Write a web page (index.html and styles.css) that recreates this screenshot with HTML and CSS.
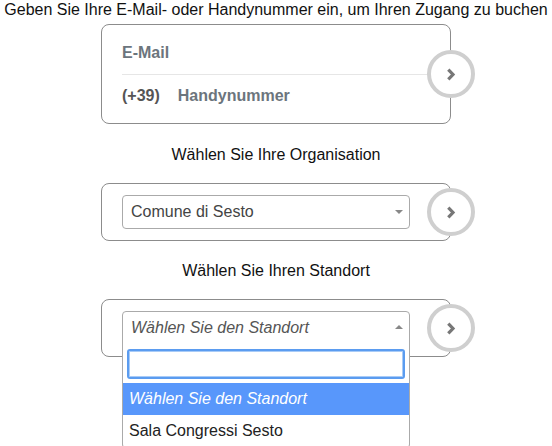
FILE: index.html
```html
<!DOCTYPE html>
<html lang="de">
<head>
    <meta charset="UTF-8">
    <meta name="viewport" content="width=device-width, initial-scale=1.0">
    <title>Zugang buchen</title>
    <link rel="stylesheet" href="styles.css">
</head>
<body>

    <p class="intro">Geben Sie Ihre E-Mail- oder Handynummer ein, um Ihren Zugang zu buchen</p>

    <div class="step">
        <div class="card card-login">
            <div class="field">E-Mail</div>
            <div class="field"><span class="prefix">(+39)</span>Handynummer</div>
        </div>
        <button class="next" type="button">
            <svg width="10" height="13" viewBox="0 0 10 13"><path d="M2.3 1.6 L7 6.5 L2.3 11.4" fill="none" stroke="#777" stroke-width="3.2"/></svg>
        </button>
    </div>

    <p class="label">Wählen Sie Ihre Organisation</p>

    <div class="step">
        <div class="card">
            <div class="select">
                <span class="select-value">Comune di Sesto</span>
                <span class="arrow"></span>
            </div>
        </div>
        <button class="next" type="button">
            <svg width="10" height="13" viewBox="0 0 10 13"><path d="M2.3 1.6 L7 6.5 L2.3 11.4" fill="none" stroke="#777" stroke-width="3.2"/></svg>
        </button>
    </div>

    <p class="label">Wählen Sie Ihren Standort</p>

    <div class="step">
        <div class="card">
            <div class="select open">
                <span class="select-value placeholder">Wählen Sie den Standort</span>
                <span class="arrow"></span>
                <div class="dropdown">
                    <div class="search"><input type="text" class="search-field" autofocus></div>
                    <ul class="options">
                        <li class="option highlighted">Wählen Sie den Standort</li>
                        <li class="option">Sala Congressi Sesto</li>
                    </ul>
                </div>
            </div>
        </div>
        <button class="next" type="button">
            <svg width="10" height="13" viewBox="0 0 10 13"><path d="M2.3 1.6 L7 6.5 L2.3 11.4" fill="none" stroke="#777" stroke-width="3.2"/></svg>
        </button>
    </div>

</body>
</html>
```

FILE: styles.css
```css
html, body {
    min-height: 100%;
}

body {
    margin: 0;
    min-height: 446px;
    font-family: "Liberation Sans", Arial, Helvetica, sans-serif;
    font-size: 16px;
    color: #111;
    background: #fff;
}

.intro {
    margin: 1px 0 5px;
    line-height: 18px;
    text-align: center;
    white-space: nowrap;
}

.label {
    margin: 22px 0 19px;
    line-height: 18px;
    text-align: center;
}

.label + .step + .label {
    margin-top: 21px;
}

.step {
    width: 350px;
    margin: 0 auto;
    display: flex;
    align-items: center;
}

.card {
    flex: 0 0 350px;
    box-sizing: border-box;
    border: 1px solid #8c8c8c;
    border-radius: 8px;
    padding: 11px 40px 11px 20px;
}

.card-login {
    padding: 0 0 0 20px;
}

.field {
    height: 49px;
    box-sizing: border-box;
    padding-top: 9px;
    line-height: 38px;
    font-weight: bold;
    color: #6c757d;
}

.field + .field {
    padding-top: 2px;
    border-top: 1px solid #e6e6e6;
}

.prefix {
    color: #555;
    margin-right: 18px;
}

.next {
    flex: none;
    width: 48px;
    height: 48px;
    margin-left: -24px;
    padding: 0;
    border: 4px solid #cfcfcf;
    border-radius: 50%;
    background: #fff;
    display: flex;
    align-items: center;
    justify-content: center;
    position: relative;
}

.select {
    position: relative;
    height: 34px;
    box-sizing: border-box;
    border: 1px solid #aaa;
    border-radius: 4px;
    padding-left: 8px;
    line-height: 32px;
    color: #444;
}

.select.open {
    border-bottom-left-radius: 0;
    border-bottom-right-radius: 0;
}

.placeholder {
    font-style: italic;
    color: #555;
}

.arrow {
    position: absolute;
    right: 6px;
    top: 14px;
    border-style: solid;
    border-width: 4px 4px 0;
    border-color: #888 transparent transparent;
}

.open .arrow {
    top: 13px;
    border-width: 0 4px 4px;
    border-color: transparent transparent #888;
}

.dropdown {
    position: absolute;
    left: -1px;
    right: -1px;
    top: 100%;
    background: #fff;
    border: 1px solid #aaa;
    border-top: none;
    border-radius: 0 0 4px 4px;
    z-index: 2;
}

.search {
    padding: 5px 4px 4px;
}

.search-field {
    display: block;
    width: 100%;
    height: 30px;
    box-sizing: border-box;
    margin: 0;
    border: 2px solid #5b9cf0;
    border-radius: 3px;
    box-shadow: inset 0 0 0 1px #a8cbf7;
    outline: none;
    font: inherit;
    padding: 0 6px;
}

.options {
    list-style: none;
    margin: 0;
    padding: 0;
}

.option {
    padding: 6px;
    line-height: 20px;
    color: #222;
}

.option.highlighted {
    background: #5897fb;
    color: #fff;
    font-style: italic;
}
```
